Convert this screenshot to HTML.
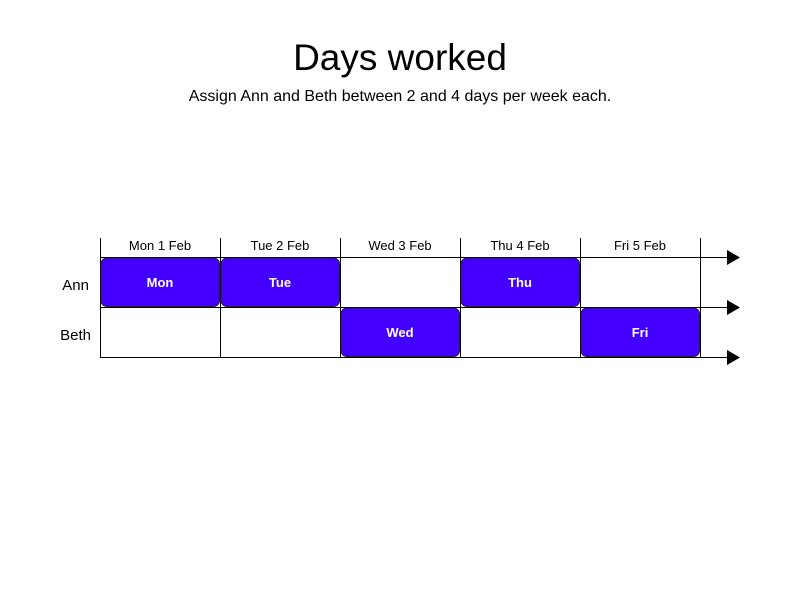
<!DOCTYPE html>
<html><head><style>body{margin:0;background:#fff}</style></head><body>
<svg width="800" height="600" xmlns="http://www.w3.org/2000/svg" font-family="Liberation Sans, sans-serif">
<rect width="800" height="600" fill="#fff"/>
<text x="400" y="70" font-size="37" text-anchor="middle">Days worked</text>
<text x="400" y="101" font-size="16" text-anchor="middle">Assign Ann and Beth between 2 and 4 days per week each.</text>
<g stroke="#000" stroke-width="1">
<line x1="100.5" y1="238" x2="100.5" y2="357"/>
<line x1="220.5" y1="238" x2="220.5" y2="357"/>
<line x1="340.5" y1="238" x2="340.5" y2="357"/>
<line x1="460.5" y1="238" x2="460.5" y2="357"/>
<line x1="580.5" y1="238" x2="580.5" y2="357"/>
<line x1="700.5" y1="238" x2="700.5" y2="357"/>
<line x1="100" y1="257.5" x2="730" y2="257.5"/>
<line x1="100" y1="307.5" x2="730" y2="307.5"/>
<line x1="100" y1="357.5" x2="730" y2="357.5"/>
</g>
<g fill="#000">
<polygon points="727,250 740,257.5 727,265"/>
<polygon points="727,300 740,307.5 727,315"/>
<polygon points="727,350 740,357.5 727,365"/>
</g>
<g font-size="13" text-anchor="middle">
<text x="160" y="250">Mon 1 Feb</text>
<text x="280" y="250">Tue 2 Feb</text>
<text x="400" y="250">Wed 3 Feb</text>
<text x="520" y="250">Thu 4 Feb</text>
<text x="640" y="250">Fri 5 Feb</text>
</g>
<g font-size="15" text-anchor="end">
<text x="89" y="290">Ann</text>
<text x="91" y="340">Beth</text>
</g>
<g fill="#4400ff" stroke="#222" stroke-width="1">
<rect x="101" y="258" width="118.5" height="48.5" rx="6"/>
<rect x="221" y="258" width="118.5" height="48.5" rx="6"/>
<rect x="461" y="258" width="118.5" height="48.5" rx="6"/>
<rect x="341" y="308" width="118.5" height="48.5" rx="6"/>
<rect x="581" y="308" width="118.5" height="48.5" rx="6"/>
</g>
<g font-size="13" font-weight="bold" fill="#fff" text-anchor="middle">
<text x="160" y="287">Mon</text>
<text x="280" y="287">Tue</text>
<text x="520" y="287">Thu</text>
<text x="400" y="337">Wed</text>
<text x="640" y="337">Fri</text>
</g>
</svg>
</body></html>
